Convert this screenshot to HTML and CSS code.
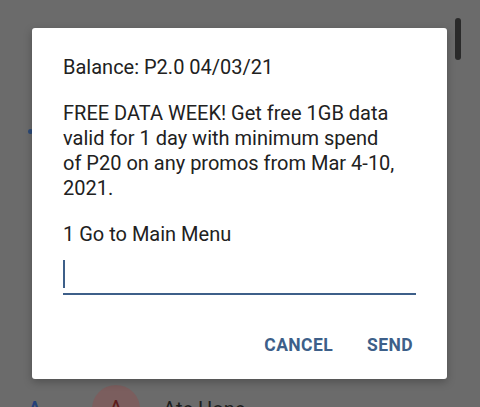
FILE: index.html
```html
<!DOCTYPE html>
<html lang="en">
<head>
    <meta charset="UTF-8">
    <meta name="viewport" content="width=device-width, initial-scale=1.0">
    <title>USSD</title>
    <link rel="stylesheet" href="styles.css">
</head>
<body>
    <div class="screen">
        <!-- contact list behind the scrim -->
        <div class="behind">
            <span class="mark"></span>
            <div class="contact">
                <span class="index">A</span>
                <span class="avatar">A</span>
                <span class="name">Ate Hone</span>
            </div>
        </div>
        <span class="scrollbar"></span>

        <div class="scrim">
            <div class="dialog">
                <p class="msg">Balance: P2.0 04/03/21</p>
                <p class="msg">FREE DATA WEEK! Get free 1GB data valid for 1 day with minimum spend<br>of P20 on any promos from <span class="nowrap">Mar 4-10,</span> 2021.</p>
                <p class="msg">1 Go to Main Menu</p>
                <div class="field">
                    <span class="caret"></span>
                </div>
                <div class="actions">
                    <button type="button">CANCEL</button>
                    <button type="button">SEND</button>
                </div>
            </div>
        </div>
    </div>
</body>
</html>
```

FILE: styles.css
```css
body {
    margin: 0;
    font-family: Roboto, 'Noto Sans', sans-serif;
    background: #6b6b6b;
}

.screen {
    position: relative;
    width: 480px;
    height: 407px;
    overflow: hidden;
    background: #6b6b6b;
}

.behind {
    height: 100%;
}

.mark {
    position: absolute;
    left: 28px;
    top: 129px;
    width: 5px;
    height: 5px;
    border-radius: 50%;
    background: #2c4a78;
}

.contact {
    position: absolute;
    left: 28px;
    top: 385px;
    display: flex;
    align-items: flex-start;
}

.index {
    width: 64px;
    padding-top: 12px;
    color: #24407a;
    font-size: 20px;
    font-weight: 500;
}

.avatar {
    width: 48px;
    height: 48px;
    border-radius: 50%;
    background: #7b5e5e;
    color: #5c1c1c;
    font-size: 22px;
    text-align: center;
    line-height: 48px;
}

.name {
    margin-left: 23px;
    padding-top: 12px;
    color: #1e1e1e;
    font-size: 20px;
}

.scrollbar {
    position: absolute;
    left: 455px;
    top: 18px;
    width: 6px;
    height: 42px;
    border-radius: 3px;
    background: #2a2a2a;
}

.scrim {
    position: absolute;
    left: 32px;
    top: 28px;
}

.dialog {
    width: 353px;
    height: 351px;
    padding: 0 31px;
    background: #fff;
    border-radius: 3px;
    box-shadow: 0 3px 8px rgba(0, 0, 0, 0.25);
    display: flex;
    flex-direction: column;
}

.msg {
    margin: 0;
    color: #212121;
    font-size: 20px;
    line-height: 25px;
}

.msg:first-child {
    margin-top: 26.5px;
}

.msg + .msg {
    margin-top: 21px;
}

.nowrap {
    white-space: nowrap;
}

.field {
    margin-top: 10px;
    height: 36px;
    border-bottom: 2px solid #3d5f89;
}

.caret {
    display: block;
    margin-top: 3px;
    width: 2px;
    height: 28px;
    background: #3d5f89;
}

.actions {
    display: flex;
    justify-content: flex-end;
    gap: 34px;
    margin-top: 40px;
    padding-right: 3px;
}

.actions button {
    padding: 0;
    border: none;
    background: none;
    color: #3d5f89;
    font-family: Roboto, sans-serif;
    font-size: 17.5px;
    line-height: 20px;
    font-weight: 700;
    letter-spacing: 0.4px;
}
```
